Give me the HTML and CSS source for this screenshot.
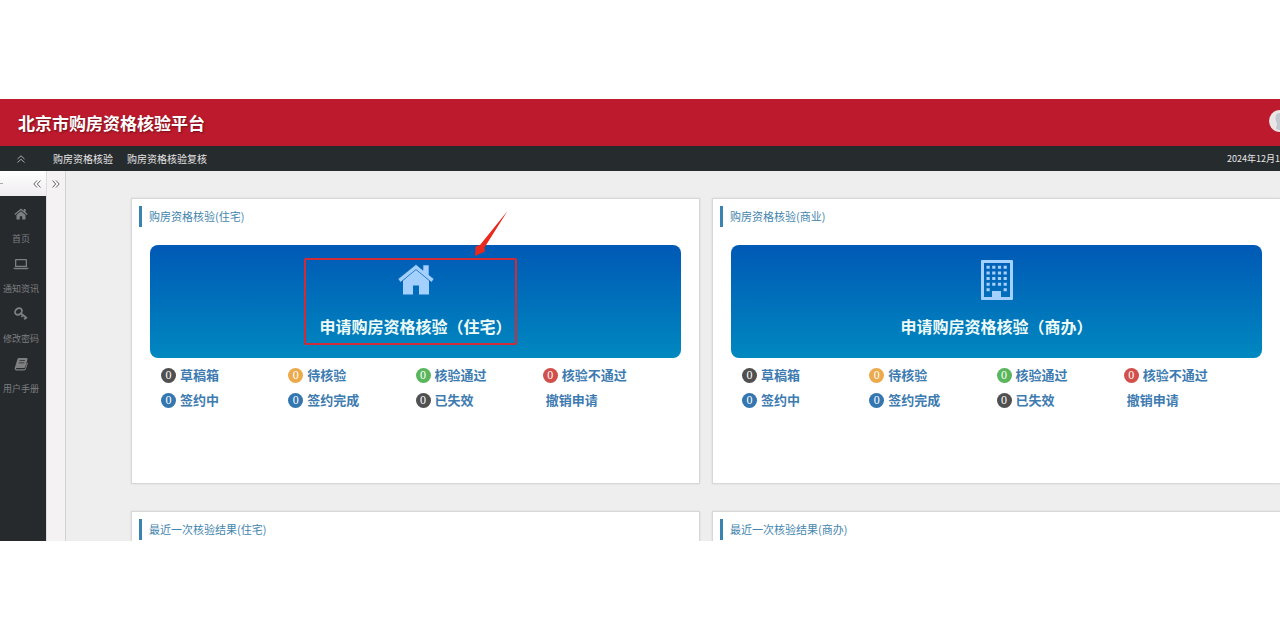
FILE: index.html
```html
<!DOCTYPE html>
<html lang="zh-CN">
<head>
<meta charset="utf-8">
<title>北京市购房资格核验平台</title>
<link rel="stylesheet" href="styles.css">
</head>
<body>
<div class="app">
  <header class="topbar">
    <h1 class="topbar-title">北京市购房资格核验平台</h1>
    <svg class="avatar" viewBox="0 0 22 22" aria-hidden="true"><circle cx="11" cy="11" r="11" fill="#e9e7e6"/><path d="M11 3c-3 0-5 2-4.500 5.500C7 12 8 13 8 14c0 2-1 3-1 5A11 11 0 0 0 18 18.500C17 16 14 16 14 14c0-1 1-2 1.500-5.500C16 5 14 3 11 3z" fill="#c3c7cf"/></svg>
  </header>
  <nav class="menubar">
    <button class="icon-button menubar-toggle" aria-label="收起顶部"><svg width="8" height="8" viewBox="0 0 8 8"><path d="M.5 4 4 .8 7.500 4M.5 7.500 4 4.300 7.500 7.500"/></svg></button>
    <a class="menubar-link" href="#">购房资格核验</a>
    <a class="menubar-link" href="#">购房资格核验复核</a>
    <span class="menubar-date">2024年12月1</span>
  </nav>
  <div class="workspace">
    <aside class="sidebar">
      <div class="sidebar-head"><span class="sidebar-dash"></span><button class="icon-button" aria-label="收起菜单"><svg width="8" height="8" viewBox="0 0 8 8"><path d="M4 .5.800 4 4 7.500M7.500.5 4.300 4 7.500 7.500"/></svg></button></div>
      <a class="side-item" href="#"><svg width="14" height="14" viewBox="0 0 14 14"><path d="M7 4.200 2.500 8v4.500h3.300V9.200h2.400v3.300h3.300V8z"/><path d="M7 1.500.4 7l.8.9L7 3.200l5.800 4.700.8-.9-2-1.700V2H9.800v1.800z"/></svg><span>首页</span></a>
      <a class="side-item" href="#"><svg width="16" height="14" viewBox="0 0 16 14"><path d="M3 2h10a1 1 0 0 1 1 1v7H2V3a1 1 0 0 1 1-1zm.3 1.200v5.600h9.400V3.200zM.5 10.700h15v.6c0 .5-.6.900-1.300.9H1.800c-.7 0-1.300-.4-1.300-.9z" fill-rule="evenodd"/></svg><span>通知资讯</span></a>
      <a class="side-item" href="#"><svg width="14" height="14" viewBox="0 0 14 14"><g fill="none" stroke="currentColor" stroke-width="1.800"><ellipse cx="4.500" cy="4.500" rx="3.700" ry="3" transform="rotate(-40 4.500 4.500)"/><path d="m7 6.500 6 4.700M9 8 7.500 10M11.800 10.300 10.300 12.500"/></g></svg><span>修改密码</span></a>
      <a class="side-item" href="#"><svg width="14" height="14" viewBox="0 0 14 14"><path d="M5 1h7.300c1 0 1.500.7 1.200 1.500L11.200 10c-.2.700-.8 1-1.500 1H2.800c-.7 0-.9.300-.8.700.1.300.5.500 1 .5h7.300c.4 0 .7-.2.800-.5l1.900-6.200.5.300c.3.200.3.500.2.900l-1.900 5.600c-.2.700-.8 1.100-1.500 1.100H2.700C1.100 13.400.3 12 .8 10.700L3.400 2.200C3.600 1.500 4.200 1 5 1zm.7 2.300-.3.800h5.400l.3-.8zm-.7 2.200-.3.800h5.400l.3-.8z" fill-rule="evenodd"/></svg><span>用户手册</span></a>
    </aside>
    <div class="rail"><button class="icon-button" aria-label="展开标签"><svg width="8" height="8" viewBox="0 0 8 8"><path d="M.5.5 3.700 4 .5 7.500M4 .5 7.200 4 4 7.500"/></svg></button></div>
    <main class="content">
      <section class="card">
        <h2 class="card-title">购房资格核验(住宅)</h2>
        <button class="banner">
          <svg class="banner-icon" width="36" height="40" viewBox="0 0 36 40"><path d="M18 9.500 5 20.500V34.500h10v-9h6v9h10V20.500z"/><path d="M18 4.500 0 19 2.500 22.300 18 9.500l15.500 12.800L36 19l-5-4V5h-6v5.200z" stroke="#0a62b8" stroke-width=".6"/></svg>
          <span>申请购房资格核验（住宅）</span>
          <span class="highlight"></span>
          <svg class="arrow" width="36" height="46" viewBox="0 0 36 46" aria-hidden="true"><path d="M34.500 0 11.500 36.500 12 40.500 2 45 2.500 35.500 7 34z" fill="#e8291c"/></svg>
        </button>
        <ul class="stats">
          <li><a href="#"><b class="badge dark">0</b>草稿箱</a></li>
          <li><a href="#"><b class="badge orange">0</b>待核验</a></li>
          <li><a href="#"><b class="badge green">0</b>核验通过</a></li>
          <li><a href="#"><b class="badge red">0</b>核验不通过</a></li>
          <li><a href="#"><b class="badge blue">0</b>签约中</a></li>
          <li><a href="#"><b class="badge blue">0</b>签约完成</a></li>
          <li><a href="#"><b class="badge dark">0</b>已失效</a></li>
          <li><a class="plain" href="#">撤销申请</a></li>
        </ul>
      </section>
      <section class="card">
        <h2 class="card-title">购房资格核验(商业)</h2>
        <button class="banner">
          <svg class="banner-icon" width="32" height="40" viewBox="0 0 32 40"><path fill-rule="evenodd" d="M1 0h30a1 1 0 0 1 1 1v38a1 1 0 0 1-1 1H1a1 1 0 0 1-1-1V1a1 1 0 0 1 1-1zm2 3v34h8v-6h9v6h9V3z"/><path d="M5.500 7.200h25M5.500 12.900h25M5.500 18.600h25M5.500 24.300h25" fill="none" stroke="#a3d0ff" stroke-width="3" stroke-dasharray="3.200 2.500 3.200 2.500 3.200 2.500 3.200 30"/><path d="M5.500 28.300h3.200v3H5.500zM22.600 28.300h3.200v3h-3.200z"/></svg>
          <span>申请购房资格核验（商办）</span>
        </button>
        <ul class="stats">
          <li><a href="#"><b class="badge dark">0</b>草稿箱</a></li>
          <li><a href="#"><b class="badge orange">0</b>待核验</a></li>
          <li><a href="#"><b class="badge green">0</b>核验通过</a></li>
          <li><a href="#"><b class="badge red">0</b>核验不通过</a></li>
          <li><a href="#"><b class="badge blue">0</b>签约中</a></li>
          <li><a href="#"><b class="badge blue">0</b>签约完成</a></li>
          <li><a href="#"><b class="badge dark">0</b>已失效</a></li>
          <li><a class="plain" href="#">撤销申请</a></li>
        </ul>
      </section>
      <section class="card"><h2 class="card-title">最近一次核验结果(住宅)</h2></section>
      <section class="card"><h2 class="card-title">最近一次核验结果(商办)</h2></section>
    </main>
  </div>
</div>
</body>
</html>
```

FILE: styles.css
```css
* { box-sizing: border-box; }
body {
  margin: 0;
  background: #fff;
  font-family: "Noto Sans CJK SC", "Noto Sans", sans-serif;
}
a { color: inherit; text-decoration: none; }
button { border: 0; padding: 0; font: inherit; cursor: pointer; }
.app { margin-top: 99px; overflow: hidden; }

.topbar {
  display: flex;
  align-items: center;
  justify-content: space-between;
  height: 47px;
  padding-left: 18px;
  background: #bd1a2d;
}
.topbar-title {
  margin: 0;
  color: #fff;
  font-size: 17px;
  line-height: 24px;
  text-shadow: 1px 1px 2px rgba(0, 0, 0, .4);
}
.avatar { flex: none; width: 22px; height: 22px; margin: 0 -11px 3px 0; }

.icon-button { display: flex; background: none; color: #666; }
.icon-button svg { fill: none; stroke: currentColor; }

.menubar {
  display: flex;
  align-items: center;
  gap: 14px;
  height: 25px;
  padding-left: 17px;
  background: #262b2e;
  color: #e6e6e6;
  font-size: 10px;
}
.menubar-toggle { margin-right: 14px; color: #aaa; }
.menubar-date { margin-left: auto; font-size: 9px; white-space: nowrap; }

.workspace { display: flex; height: 370px; background: #eee; }
.sidebar { flex: none; width: 46px; background: #262a2d; }
.sidebar-head {
  display: flex;
  align-items: center;
  justify-content: space-between;
  height: 25px;
  margin-bottom: 11px;
  padding-right: 5px;
  background: linear-gradient(#fff, #eeecef);
}
.sidebar-dash { width: 3px; height: 1px; background: #aaa; }
.side-item {
  display: flex;
  flex-direction: column;
  align-items: center;
  gap: 10px;
  height: 50px;
  padding-right: 4px;
  color: #7d7f81;
  font-size: 9px;
  line-height: 16px;
  white-space: nowrap;
}
.side-item svg { fill: currentColor; }
.rail {
  flex: none;
  width: 20px;
  padding: 9px 0 0 5px;
  border-left: 1px solid #ddd;
  border-right: 1px solid #d2d2d4;
  background: #f5f2f4;
}

.content {
  flex: 1;
  display: grid;
  grid-template-columns: 1fr 1fr;
  grid-auto-rows: 286px;
  gap: 27px 12px;
  margin-right: -1px;
  padding: 27px 0 0 65px;
  overflow: hidden;
}
.card {
  padding: 7px 18px 0;
  border: 1px solid #d8d8d8;
  background: #fff;
  box-shadow: 0 0 2px rgba(0, 0, 0, .1);
}
.card-title {
  margin: 0 0 18px -11px;
  padding-left: 7px;
  border-left: 3px solid #3a83b0;
  color: #4385ae;
  font-size: 11px;
  font-weight: 400;
  line-height: 21px;
}
.banner {
  position: relative;
  display: flex;
  flex-direction: column;
  align-items: center;
  gap: 14px;
  width: 100%;
  height: 113px;
  padding-top: 15px;
  border-radius: 8px;
  background: linear-gradient(#0059b5, #0088c0);
  color: #eefaf6;
  font-size: 16px;
  font-weight: 700;
  line-height: 24px;
}
.banner-icon { fill: #a3d0ff; }
.highlight {
  position: absolute;
  top: 13px;
  left: calc(50% - 112px);
  width: 213px;
  height: 87px;
  border: 2px solid #cf2c38;
  border-radius: 2px;
}
.arrow { position: absolute; top: -34px; left: calc(50% + 57px); }

.stats {
  display: grid;
  grid-template-columns: repeat(4, 1fr);
  grid-auto-rows: 25px;
  margin: 5px 0 0;
  padding: 0 11px;
  list-style: none;
  color: #3d7bb0;
  font-size: 13px;
  font-weight: 700;
  line-height: 24px;
}
.stats a { display: flex; align-items: center; gap: 4px; }
.stats .plain { padding-left: 3px; }
.badge {
  width: 15px;
  height: 15px;
  border-radius: 50%;
  color: #fff;
  font: 400 12px/15px "Liberation Serif", serif;
  text-align: center;
}
.dark { background: #505050; }
.orange { background: #ecaa4c; }
.green { background: #5ab65c; }
.red { background: #d2504c; }
.blue { background: #3476b0; }
```
